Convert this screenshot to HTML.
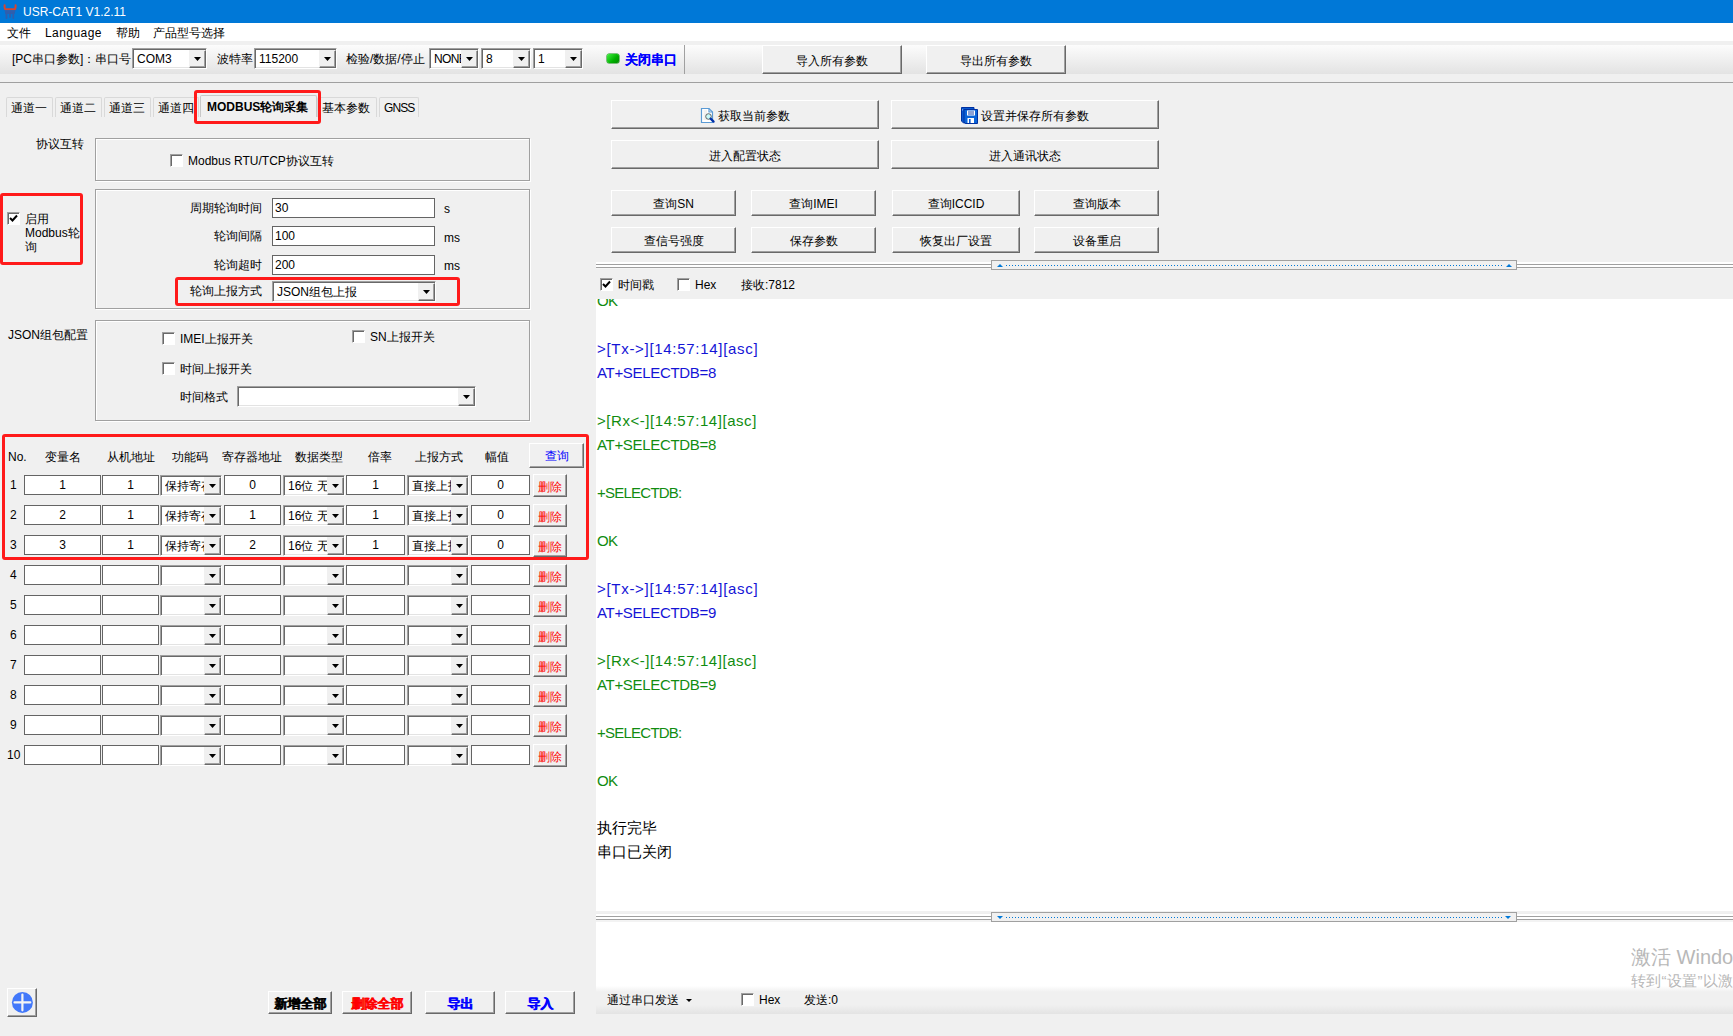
<!DOCTYPE html><html><head><meta charset="utf-8"><style>
*{box-sizing:border-box;margin:0;padding:0}
html,body{width:1733px;height:1036px;overflow:hidden;background:#f0f0f0;font-family:"Liberation Sans",sans-serif;font-size:12px;color:#000}
.a{position:absolute}
.t{white-space:nowrap;line-height:14px}
.btn{background:#f0f0f0;border-top:1px solid #fff;border-left:1px solid #fff;border-right:1px solid #696969;border-bottom:1px solid #696969;box-shadow:inset -1px -1px 0 #a0a0a0;display:flex;align-items:center;justify-content:center;white-space:nowrap;padding-top:2px}
.edit{background:#fff;border:1px solid #646464;padding:2px 2px;line-height:14px;white-space:nowrap;overflow:hidden}
.combo{background:#fff;border-top:1px solid #a0a0a0;border-left:1px solid #a0a0a0;border-right:1px solid #fff;border-bottom:1px solid #fff;box-shadow:inset 1px 1px 0 #696969, inset -1px -1px 0 #e3e3e3;overflow:hidden}
.combo .ct{position:absolute;left:4px;right:17px;overflow:hidden;top:3px;line-height:14px;white-space:nowrap}
.cb{position:absolute;right:0;top:1px;bottom:0;width:17px;background:#f0f0f0;border-top:1px solid #f0f0f0;border-left:1px solid #f0f0f0;border-right:1px solid #696969;border-bottom:1px solid #696969;box-shadow:inset -1px -1px 0 #a0a0a0}
.arr{position:absolute;left:4px;top:50%;margin-top:-2px}
.chk{background:#fff;border-top:1px solid #a0a0a0;border-left:1px solid #a0a0a0;border-right:1px solid #fff;border-bottom:1px solid #fff;box-shadow:inset 1px 1px 0 #696969}
.grp{border:1px solid #a0a0a0;box-shadow:inset 1px 1px 0 #fff, 1px 1px 0 #fff}
.red{border:3px solid #ff1a1a;border-radius:3px}
.tab{background:#f0f0f0;border:1px solid #d9d9d9;border-bottom:none;border-radius:2px 2px 0 0;white-space:nowrap;line-height:14px}
.log{font-size:15px;line-height:24px;white-space:pre;}
</style></head><body><div class="a " style="left:0px;top:0px;width:1733px;height:23px;background:#0078d7"></div>
<svg class="a" style="left:0;top:1px" width="20" height="20" viewBox="0 0 20 20"><path d="M4.6 4.2Q4.4 8 5.5 8.3H14.5Q15.8 8 15.6 4.2" stroke="#d8452e" stroke-width="2" fill="none" stroke-linecap="round"/><path d="M4.5 9.3H15.5L14.6 13H5.4Z" fill="#2f5fae"/><path d="M6.5 12V17M10 12V16M13.3 12V17" stroke="#2f5fae" stroke-width="1.8" stroke-linecap="round"/></svg>
<div class="a t " style="left:23px;top:5px;color:#fff;font-size:12px">USR-CAT1 V1.2.11</div>
<div class="a " style="left:0px;top:23px;width:1733px;height:18px;background:#fff"></div>
<div class="a t " style="left:7px;top:26px;">文件</div>
<div class="a t " style="left:45px;top:26px;letter-spacing:0.45px">Language</div>
<div class="a t " style="left:116px;top:26px;">帮助</div>
<div class="a t " style="left:153px;top:26px;">产品型号选择</div>
<div class="a " style="left:0px;top:45px;width:1733px;height:29px;background:linear-gradient(#fcfcfc,#e3e3e3)"></div>
<div class="a " style="left:0px;top:82px;width:1733px;height:1px;background:#a0a0a0"></div>
<div class="a t " style="left:12px;top:52px;">[PC串口参数]：串口号</div>
<div class="a combo" style="left:132px;top:48px;width:75px;height:21px;"><span class="ct">COM3</span><div class="cb"><svg class="arr" width="7" height="4" viewBox="0 0 7 4"><path d="M0 0H7L3.5 4Z" fill="#000"/></svg></div></div>
<div class="a t " style="left:217px;top:52px;">波特率</div>
<div class="a combo" style="left:254px;top:48px;width:83px;height:21px;"><span class="ct">115200</span><div class="cb"><svg class="arr" width="7" height="4" viewBox="0 0 7 4"><path d="M0 0H7L3.5 4Z" fill="#000"/></svg></div></div>
<div class="a t " style="left:346px;top:52px;">检验/数据/停止</div>
<div class="a combo" style="left:429px;top:48px;width:50px;height:21px;"><span class="ct"><span style="letter-spacing:-0.6px">NONE</span></span><div class="cb"><svg class="arr" width="7" height="4" viewBox="0 0 7 4"><path d="M0 0H7L3.5 4Z" fill="#000"/></svg></div></div>
<div class="a combo" style="left:481px;top:48px;width:50px;height:21px;"><span class="ct">8</span><div class="cb"><svg class="arr" width="7" height="4" viewBox="0 0 7 4"><path d="M0 0H7L3.5 4Z" fill="#000"/></svg></div></div>
<div class="a combo" style="left:533px;top:48px;width:50px;height:21px;"><span class="ct">1</span><div class="cb"><svg class="arr" width="7" height="4" viewBox="0 0 7 4"><path d="M0 0H7L3.5 4Z" fill="#000"/></svg></div></div>
<div class="a " style="left:607px;top:54px;width:12px;height:9px;background:linear-gradient(135deg,#40f040,#00b000 60%,#008a00);border-radius:2px;box-shadow:0 0 0 0.5px #0a8a0a"></div>
<div class="a t " style="left:625px;top:53px;color:#0000ff;font-weight:bold;font-size:13px;text-shadow:0.4px 0 0 #0000ff">关闭串口</div>
<div class="a " style="left:684px;top:45px;width:1px;height:29px;background:#a0a0a0"></div>
<div class="a btn" style="left:762px;top:45px;width:140px;height:29px;padding-top:4px">导入所有参数</div>
<div class="a btn" style="left:926px;top:45px;width:140px;height:29px;padding-top:4px">导出所有参数</div>
<div class="a tab" style="left:6px;top:97px;width:47px;height:20px;"><span class="a t" style="left:4px;top:3px;letter-spacing:0">通道一</span></div>
<div class="a tab" style="left:55px;top:97px;width:47px;height:20px;"><span class="a t" style="left:4px;top:3px;letter-spacing:0">通道二</span></div>
<div class="a tab" style="left:104px;top:97px;width:47px;height:20px;"><span class="a t" style="left:4px;top:3px;letter-spacing:0">通道三</span></div>
<div class="a tab" style="left:153px;top:97px;width:46px;height:20px;"><span class="a t" style="left:4px;top:3px;letter-spacing:0">通道四</span></div>
<div class="a tab" style="left:317px;top:97px;width:60px;height:20px;"><span class="a t" style="left:4px;top:3px;letter-spacing:0">基本参数</span></div>
<div class="a tab" style="left:379px;top:97px;width:40px;height:20px;"><span class="a t" style="left:4px;top:3px;letter-spacing:-0.9px">GNSS</span></div>
<div class="a tab" style="left:200px;top:95px;width:117px;height:22px;border-color:#c8c8c8"><span class="a t" style="left:6px;top:4px;font-weight:bold">MODBUS轮询采集</span></div>
<div class="a red" style="left:194px;top:90px;width:127px;height:34px;"></div>
<div class="a t " style="left:36px;top:137px;">协议互转</div>
<div class="a grp" style="left:95px;top:138px;width:435px;height:43px;"></div>
<div class="a chk" style="left:170px;top:154px;width:13px;height:13px;"></div>
<div class="a t " style="left:188px;top:154px;">Modbus RTU/TCP协议互转</div>
<div class="a red" style="left:0px;top:193px;width:83px;height:72px;"></div>
<div class="a chk" style="left:7px;top:212px;width:13px;height:13px;"><svg width="9" height="9" viewBox="0 0 9 9" style="position:absolute;left:1px;top:1px"><path d="M1 4 L3.5 6.5 L8 1.5" stroke="#000" stroke-width="2" fill="none"/></svg></div>
<div class="a t " style="left:25px;top:212px;">启用</div>
<div class="a t " style="left:25px;top:226px;">Modbus轮</div>
<div class="a t " style="left:25px;top:240px;">询</div>
<div class="a grp" style="left:95px;top:189px;width:435px;height:120px;"></div>
<div class="a t " style="left:190px;top:201px;">周期轮询时间</div>
<div class="a edit" style="left:272px;top:198px;width:163px;height:20px;text-align:left;">30</div>
<div class="a t " style="left:444px;top:202px;">s</div>
<div class="a t " style="left:214px;top:229px;">轮询间隔</div>
<div class="a edit" style="left:272px;top:226px;width:163px;height:20px;text-align:left;">100</div>
<div class="a t " style="left:444px;top:231px;">ms</div>
<div class="a t " style="left:214px;top:258px;">轮询超时</div>
<div class="a edit" style="left:272px;top:255px;width:163px;height:20px;text-align:left;">200</div>
<div class="a t " style="left:444px;top:259px;">ms</div>
<div class="a t " style="left:190px;top:284px;">轮询上报方式</div>
<div class="a combo" style="left:272px;top:281px;width:164px;height:21px;"><span class="ct">JSON组包上报</span><div class="cb"><svg class="arr" width="7" height="4" viewBox="0 0 7 4"><path d="M0 0H7L3.5 4Z" fill="#000"/></svg></div></div>
<div class="a red" style="left:175px;top:277px;width:285px;height:29px;"></div>
<div class="a t " style="left:8px;top:328px;">JSON组包配置</div>
<div class="a grp" style="left:95px;top:320px;width:435px;height:101px;"></div>
<div class="a chk" style="left:162px;top:332px;width:13px;height:13px;"></div>
<div class="a t " style="left:180px;top:332px;">IMEI上报开关</div>
<div class="a chk" style="left:352px;top:330px;width:13px;height:13px;"></div>
<div class="a t " style="left:370px;top:330px;">SN上报开关</div>
<div class="a chk" style="left:162px;top:362px;width:13px;height:13px;"></div>
<div class="a t " style="left:180px;top:362px;">时间上报开关</div>
<div class="a t " style="left:180px;top:390px;">时间格式</div>
<div class="a combo" style="left:237px;top:386px;width:239px;height:21px;"><span class="ct"></span><div class="cb"><svg class="arr" width="7" height="4" viewBox="0 0 7 4"><path d="M0 0H7L3.5 4Z" fill="#000"/></svg></div></div>
<div class="a red" style="left:2px;top:434px;width:587px;height:126px;"></div>
<div class="a t " style="left:8px;top:450px;">No.</div>
<div class="a t " style="left:45px;top:450px;">变量名</div>
<div class="a t " style="left:107px;top:450px;">从机地址</div>
<div class="a t " style="left:172px;top:450px;">功能码</div>
<div class="a t " style="left:222px;top:450px;">寄存器地址</div>
<div class="a t " style="left:295px;top:450px;">数据类型</div>
<div class="a t " style="left:368px;top:450px;">倍率</div>
<div class="a t " style="left:415px;top:450px;">上报方式</div>
<div class="a t " style="left:485px;top:450px;">幅值</div>
<div class="a btn" style="left:529px;top:443px;width:55px;height:25px;color:#0000ff">查询</div>
<div class="a t " style="left:10px;top:478px;">1</div>
<div class="a edit" style="left:24px;top:475px;width:77px;height:20px;text-align:center;">1</div>
<div class="a edit" style="left:102px;top:475px;width:57px;height:20px;text-align:center;">1</div>
<div class="a combo" style="left:160px;top:475px;width:62px;height:21px;"><span class="ct">保持寄存器</span><div class="cb"><svg class="arr" width="7" height="4" viewBox="0 0 7 4"><path d="M0 0H7L3.5 4Z" fill="#000"/></svg></div></div>
<div class="a edit" style="left:224px;top:475px;width:57px;height:20px;text-align:center;">0</div>
<div class="a combo" style="left:283px;top:475px;width:62px;height:21px;"><span class="ct">16位 无符号</span><div class="cb"><svg class="arr" width="7" height="4" viewBox="0 0 7 4"><path d="M0 0H7L3.5 4Z" fill="#000"/></svg></div></div>
<div class="a edit" style="left:346px;top:475px;width:59px;height:20px;text-align:center;">1</div>
<div class="a combo" style="left:407px;top:475px;width:62px;height:21px;"><span class="ct">直接上报</span><div class="cb"><svg class="arr" width="7" height="4" viewBox="0 0 7 4"><path d="M0 0H7L3.5 4Z" fill="#000"/></svg></div></div>
<div class="a edit" style="left:471px;top:475px;width:59px;height:20px;text-align:center;">0</div>
<div class="a btn" style="left:533px;top:474px;width:34px;height:23px;color:#ff0000;padding-top:3px">删除</div>
<div class="a t " style="left:10px;top:508px;">2</div>
<div class="a edit" style="left:24px;top:505px;width:77px;height:20px;text-align:center;">2</div>
<div class="a edit" style="left:102px;top:505px;width:57px;height:20px;text-align:center;">1</div>
<div class="a combo" style="left:160px;top:505px;width:62px;height:21px;"><span class="ct">保持寄存器</span><div class="cb"><svg class="arr" width="7" height="4" viewBox="0 0 7 4"><path d="M0 0H7L3.5 4Z" fill="#000"/></svg></div></div>
<div class="a edit" style="left:224px;top:505px;width:57px;height:20px;text-align:center;">1</div>
<div class="a combo" style="left:283px;top:505px;width:62px;height:21px;"><span class="ct">16位 无符号</span><div class="cb"><svg class="arr" width="7" height="4" viewBox="0 0 7 4"><path d="M0 0H7L3.5 4Z" fill="#000"/></svg></div></div>
<div class="a edit" style="left:346px;top:505px;width:59px;height:20px;text-align:center;">1</div>
<div class="a combo" style="left:407px;top:505px;width:62px;height:21px;"><span class="ct">直接上报</span><div class="cb"><svg class="arr" width="7" height="4" viewBox="0 0 7 4"><path d="M0 0H7L3.5 4Z" fill="#000"/></svg></div></div>
<div class="a edit" style="left:471px;top:505px;width:59px;height:20px;text-align:center;">0</div>
<div class="a btn" style="left:533px;top:504px;width:34px;height:23px;color:#ff0000;padding-top:3px">删除</div>
<div class="a t " style="left:10px;top:538px;">3</div>
<div class="a edit" style="left:24px;top:535px;width:77px;height:20px;text-align:center;">3</div>
<div class="a edit" style="left:102px;top:535px;width:57px;height:20px;text-align:center;">1</div>
<div class="a combo" style="left:160px;top:535px;width:62px;height:21px;"><span class="ct">保持寄存器</span><div class="cb"><svg class="arr" width="7" height="4" viewBox="0 0 7 4"><path d="M0 0H7L3.5 4Z" fill="#000"/></svg></div></div>
<div class="a edit" style="left:224px;top:535px;width:57px;height:20px;text-align:center;">2</div>
<div class="a combo" style="left:283px;top:535px;width:62px;height:21px;"><span class="ct">16位 无符号</span><div class="cb"><svg class="arr" width="7" height="4" viewBox="0 0 7 4"><path d="M0 0H7L3.5 4Z" fill="#000"/></svg></div></div>
<div class="a edit" style="left:346px;top:535px;width:59px;height:20px;text-align:center;">1</div>
<div class="a combo" style="left:407px;top:535px;width:62px;height:21px;"><span class="ct">直接上报</span><div class="cb"><svg class="arr" width="7" height="4" viewBox="0 0 7 4"><path d="M0 0H7L3.5 4Z" fill="#000"/></svg></div></div>
<div class="a edit" style="left:471px;top:535px;width:59px;height:20px;text-align:center;">0</div>
<div class="a btn" style="left:533px;top:534px;width:34px;height:23px;color:#ff0000;padding-top:3px">删除</div>
<div class="a t " style="left:10px;top:568px;">4</div>
<div class="a edit" style="left:24px;top:565px;width:77px;height:20px;text-align:center;"></div>
<div class="a edit" style="left:102px;top:565px;width:57px;height:20px;text-align:center;"></div>
<div class="a combo" style="left:160px;top:565px;width:62px;height:21px;"><span class="ct"></span><div class="cb"><svg class="arr" width="7" height="4" viewBox="0 0 7 4"><path d="M0 0H7L3.5 4Z" fill="#000"/></svg></div></div>
<div class="a edit" style="left:224px;top:565px;width:57px;height:20px;text-align:center;"></div>
<div class="a combo" style="left:283px;top:565px;width:62px;height:21px;"><span class="ct"></span><div class="cb"><svg class="arr" width="7" height="4" viewBox="0 0 7 4"><path d="M0 0H7L3.5 4Z" fill="#000"/></svg></div></div>
<div class="a edit" style="left:346px;top:565px;width:59px;height:20px;text-align:center;"></div>
<div class="a combo" style="left:407px;top:565px;width:62px;height:21px;"><span class="ct"></span><div class="cb"><svg class="arr" width="7" height="4" viewBox="0 0 7 4"><path d="M0 0H7L3.5 4Z" fill="#000"/></svg></div></div>
<div class="a edit" style="left:471px;top:565px;width:59px;height:20px;text-align:center;"></div>
<div class="a btn" style="left:533px;top:564px;width:34px;height:23px;color:#ff0000;padding-top:3px">删除</div>
<div class="a t " style="left:10px;top:598px;">5</div>
<div class="a edit" style="left:24px;top:595px;width:77px;height:20px;text-align:center;"></div>
<div class="a edit" style="left:102px;top:595px;width:57px;height:20px;text-align:center;"></div>
<div class="a combo" style="left:160px;top:595px;width:62px;height:21px;"><span class="ct"></span><div class="cb"><svg class="arr" width="7" height="4" viewBox="0 0 7 4"><path d="M0 0H7L3.5 4Z" fill="#000"/></svg></div></div>
<div class="a edit" style="left:224px;top:595px;width:57px;height:20px;text-align:center;"></div>
<div class="a combo" style="left:283px;top:595px;width:62px;height:21px;"><span class="ct"></span><div class="cb"><svg class="arr" width="7" height="4" viewBox="0 0 7 4"><path d="M0 0H7L3.5 4Z" fill="#000"/></svg></div></div>
<div class="a edit" style="left:346px;top:595px;width:59px;height:20px;text-align:center;"></div>
<div class="a combo" style="left:407px;top:595px;width:62px;height:21px;"><span class="ct"></span><div class="cb"><svg class="arr" width="7" height="4" viewBox="0 0 7 4"><path d="M0 0H7L3.5 4Z" fill="#000"/></svg></div></div>
<div class="a edit" style="left:471px;top:595px;width:59px;height:20px;text-align:center;"></div>
<div class="a btn" style="left:533px;top:594px;width:34px;height:23px;color:#ff0000;padding-top:3px">删除</div>
<div class="a t " style="left:10px;top:628px;">6</div>
<div class="a edit" style="left:24px;top:625px;width:77px;height:20px;text-align:center;"></div>
<div class="a edit" style="left:102px;top:625px;width:57px;height:20px;text-align:center;"></div>
<div class="a combo" style="left:160px;top:625px;width:62px;height:21px;"><span class="ct"></span><div class="cb"><svg class="arr" width="7" height="4" viewBox="0 0 7 4"><path d="M0 0H7L3.5 4Z" fill="#000"/></svg></div></div>
<div class="a edit" style="left:224px;top:625px;width:57px;height:20px;text-align:center;"></div>
<div class="a combo" style="left:283px;top:625px;width:62px;height:21px;"><span class="ct"></span><div class="cb"><svg class="arr" width="7" height="4" viewBox="0 0 7 4"><path d="M0 0H7L3.5 4Z" fill="#000"/></svg></div></div>
<div class="a edit" style="left:346px;top:625px;width:59px;height:20px;text-align:center;"></div>
<div class="a combo" style="left:407px;top:625px;width:62px;height:21px;"><span class="ct"></span><div class="cb"><svg class="arr" width="7" height="4" viewBox="0 0 7 4"><path d="M0 0H7L3.5 4Z" fill="#000"/></svg></div></div>
<div class="a edit" style="left:471px;top:625px;width:59px;height:20px;text-align:center;"></div>
<div class="a btn" style="left:533px;top:624px;width:34px;height:23px;color:#ff0000;padding-top:3px">删除</div>
<div class="a t " style="left:10px;top:658px;">7</div>
<div class="a edit" style="left:24px;top:655px;width:77px;height:20px;text-align:center;"></div>
<div class="a edit" style="left:102px;top:655px;width:57px;height:20px;text-align:center;"></div>
<div class="a combo" style="left:160px;top:655px;width:62px;height:21px;"><span class="ct"></span><div class="cb"><svg class="arr" width="7" height="4" viewBox="0 0 7 4"><path d="M0 0H7L3.5 4Z" fill="#000"/></svg></div></div>
<div class="a edit" style="left:224px;top:655px;width:57px;height:20px;text-align:center;"></div>
<div class="a combo" style="left:283px;top:655px;width:62px;height:21px;"><span class="ct"></span><div class="cb"><svg class="arr" width="7" height="4" viewBox="0 0 7 4"><path d="M0 0H7L3.5 4Z" fill="#000"/></svg></div></div>
<div class="a edit" style="left:346px;top:655px;width:59px;height:20px;text-align:center;"></div>
<div class="a combo" style="left:407px;top:655px;width:62px;height:21px;"><span class="ct"></span><div class="cb"><svg class="arr" width="7" height="4" viewBox="0 0 7 4"><path d="M0 0H7L3.5 4Z" fill="#000"/></svg></div></div>
<div class="a edit" style="left:471px;top:655px;width:59px;height:20px;text-align:center;"></div>
<div class="a btn" style="left:533px;top:654px;width:34px;height:23px;color:#ff0000;padding-top:3px">删除</div>
<div class="a t " style="left:10px;top:688px;">8</div>
<div class="a edit" style="left:24px;top:685px;width:77px;height:20px;text-align:center;"></div>
<div class="a edit" style="left:102px;top:685px;width:57px;height:20px;text-align:center;"></div>
<div class="a combo" style="left:160px;top:685px;width:62px;height:21px;"><span class="ct"></span><div class="cb"><svg class="arr" width="7" height="4" viewBox="0 0 7 4"><path d="M0 0H7L3.5 4Z" fill="#000"/></svg></div></div>
<div class="a edit" style="left:224px;top:685px;width:57px;height:20px;text-align:center;"></div>
<div class="a combo" style="left:283px;top:685px;width:62px;height:21px;"><span class="ct"></span><div class="cb"><svg class="arr" width="7" height="4" viewBox="0 0 7 4"><path d="M0 0H7L3.5 4Z" fill="#000"/></svg></div></div>
<div class="a edit" style="left:346px;top:685px;width:59px;height:20px;text-align:center;"></div>
<div class="a combo" style="left:407px;top:685px;width:62px;height:21px;"><span class="ct"></span><div class="cb"><svg class="arr" width="7" height="4" viewBox="0 0 7 4"><path d="M0 0H7L3.5 4Z" fill="#000"/></svg></div></div>
<div class="a edit" style="left:471px;top:685px;width:59px;height:20px;text-align:center;"></div>
<div class="a btn" style="left:533px;top:684px;width:34px;height:23px;color:#ff0000;padding-top:3px">删除</div>
<div class="a t " style="left:10px;top:718px;">9</div>
<div class="a edit" style="left:24px;top:715px;width:77px;height:20px;text-align:center;"></div>
<div class="a edit" style="left:102px;top:715px;width:57px;height:20px;text-align:center;"></div>
<div class="a combo" style="left:160px;top:715px;width:62px;height:21px;"><span class="ct"></span><div class="cb"><svg class="arr" width="7" height="4" viewBox="0 0 7 4"><path d="M0 0H7L3.5 4Z" fill="#000"/></svg></div></div>
<div class="a edit" style="left:224px;top:715px;width:57px;height:20px;text-align:center;"></div>
<div class="a combo" style="left:283px;top:715px;width:62px;height:21px;"><span class="ct"></span><div class="cb"><svg class="arr" width="7" height="4" viewBox="0 0 7 4"><path d="M0 0H7L3.5 4Z" fill="#000"/></svg></div></div>
<div class="a edit" style="left:346px;top:715px;width:59px;height:20px;text-align:center;"></div>
<div class="a combo" style="left:407px;top:715px;width:62px;height:21px;"><span class="ct"></span><div class="cb"><svg class="arr" width="7" height="4" viewBox="0 0 7 4"><path d="M0 0H7L3.5 4Z" fill="#000"/></svg></div></div>
<div class="a edit" style="left:471px;top:715px;width:59px;height:20px;text-align:center;"></div>
<div class="a btn" style="left:533px;top:714px;width:34px;height:23px;color:#ff0000;padding-top:3px">删除</div>
<div class="a t " style="left:7px;top:748px;">10</div>
<div class="a edit" style="left:24px;top:745px;width:77px;height:20px;text-align:center;"></div>
<div class="a edit" style="left:102px;top:745px;width:57px;height:20px;text-align:center;"></div>
<div class="a combo" style="left:160px;top:745px;width:62px;height:21px;"><span class="ct"></span><div class="cb"><svg class="arr" width="7" height="4" viewBox="0 0 7 4"><path d="M0 0H7L3.5 4Z" fill="#000"/></svg></div></div>
<div class="a edit" style="left:224px;top:745px;width:57px;height:20px;text-align:center;"></div>
<div class="a combo" style="left:283px;top:745px;width:62px;height:21px;"><span class="ct"></span><div class="cb"><svg class="arr" width="7" height="4" viewBox="0 0 7 4"><path d="M0 0H7L3.5 4Z" fill="#000"/></svg></div></div>
<div class="a edit" style="left:346px;top:745px;width:59px;height:20px;text-align:center;"></div>
<div class="a combo" style="left:407px;top:745px;width:62px;height:21px;"><span class="ct"></span><div class="cb"><svg class="arr" width="7" height="4" viewBox="0 0 7 4"><path d="M0 0H7L3.5 4Z" fill="#000"/></svg></div></div>
<div class="a edit" style="left:471px;top:745px;width:59px;height:20px;text-align:center;"></div>
<div class="a btn" style="left:533px;top:744px;width:34px;height:23px;color:#ff0000;padding-top:3px">删除</div>
<div class="a btn" style="left:7px;top:988px;width:30px;height:29px;"><svg class="a" style="left:2px;top:1px" width="24" height="24" viewBox="0 0 24 24"><circle cx="12.4" cy="12.4" r="10.5" fill="#4278fa"/><path d="M12.4 4.5V20.3M4.5 12.4H20.3" stroke="#f4f4f4" stroke-width="2.2" stroke-linecap="round"/></svg></div>
<div class="a btn" style="left:268px;top:991px;width:64px;height:23px;font-weight:bold;font-size:13px;padding-top:3px;text-shadow:0.5px 0 0 currentColor">新增全部</div>
<div class="a btn" style="left:342px;top:991px;width:70px;height:23px;font-weight:bold;color:#ff0000;font-size:13px;padding-top:3px;text-shadow:0.5px 0 0 currentColor">删除全部</div>
<div class="a btn" style="left:425px;top:991px;width:70px;height:23px;font-weight:bold;color:#0000ff;font-size:13px;padding-top:3px;text-shadow:0.5px 0 0 currentColor">导出</div>
<div class="a btn" style="left:505px;top:991px;width:70px;height:23px;font-weight:bold;color:#0000ff;font-size:13px;padding-top:3px;text-shadow:0.5px 0 0 currentColor">导入</div>
<div class="a btn" style="left:611px;top:100px;width:268px;height:29px;padding-top:4px;padding-left:18px"><svg class="a" style="left:88px;top:6px" width="20" height="18" viewBox="0 0 20 18"><path d="M1.5 1.5H9L12.5 5V15.5H1.5Z" fill="#fff" stroke="#5b9bd5" stroke-width="1.2"/><path d="M9 1.5V5H12.5" fill="none" stroke="#5b9bd5" stroke-width="1.2"/><path d="M3.5 4H7M3.5 6H7M3.5 8H6M3.5 10H6M3.5 12H7" stroke="#ddd" stroke-width="0.8"/><circle cx="8.5" cy="9.5" r="2.8" fill="#c8f8f8" stroke="#555" stroke-width="0.9"/><path d="M10.6 11.6L13.6 14.6" stroke="#0030a8" stroke-width="2.2" stroke-linecap="round"/></svg>获取当前参数</div>
<div class="a btn" style="left:891px;top:100px;width:268px;height:29px;padding-top:4px;padding-left:19px"><svg class="a" style="left:69px;top:6px" width="18" height="18" viewBox="0 0 18 18"><path d="M0.5 0.5H13V14L11 16H2.5L0.5 14Z" fill="#0a5ad0" stroke="#0030a0" stroke-width="1"/><path d="M3 2.5H16.5V16.5H4.5L3 15Z" fill="#0a64d8" stroke="#0030a0" stroke-width="1"/><rect x="6" y="3.5" width="8" height="5" fill="#fff"/><path d="M7 5H13M7 7H13" stroke="#0030a0" stroke-width="0.9"/><rect x="6.5" y="11" width="6.5" height="5" fill="#fff"/><rect x="8" y="12" width="1.6" height="4" fill="#0a5ad0"/><path d="M1.5 2.5V13" stroke="#fff" stroke-width="0.8" stroke-dasharray="0.8 12"/></svg>设置并保存所有参数</div>
<div class="a btn" style="left:611px;top:140px;width:268px;height:29px;padding-top:4px">进入配置状态</div>
<div class="a btn" style="left:891px;top:140px;width:268px;height:29px;padding-top:4px">进入通讯状态</div>
<div class="a btn" style="left:611px;top:190px;width:125px;height:26px;padding-top:3px">查询SN</div>
<div class="a btn" style="left:751px;top:190px;width:125px;height:26px;padding-top:3px">查询IMEI</div>
<div class="a btn" style="left:892px;top:190px;width:128px;height:26px;padding-top:3px">查询ICCID</div>
<div class="a btn" style="left:1034px;top:190px;width:125px;height:26px;padding-top:3px">查询版本</div>
<div class="a btn" style="left:611px;top:227px;width:125px;height:26px;padding-top:3px">查信号强度</div>
<div class="a btn" style="left:751px;top:227px;width:125px;height:26px;padding-top:3px">保存参数</div>
<div class="a btn" style="left:892px;top:227px;width:128px;height:26px;padding-top:3px">恢复出厂设置</div>
<div class="a btn" style="left:1034px;top:227px;width:125px;height:26px;padding-top:3px">设备重启</div>
<div class="a " style="left:596px;top:262px;width:1137px;height:7px;background:linear-gradient(#fff 0 2px,#a0a0a0 2px 3px,#fff 3px 5px,#a0a0a0 5px 6px,#f5f5f5 6px 7px)"></div>
<div class="a " style="left:991px;top:260px;width:526px;height:10px;background:#f0f0f0;border:1px solid #a0a0a0"><div class="a" style="left:14px;right:14px;top:4px;height:1px;background:repeating-linear-gradient(90deg,#0078d7 0 1px,transparent 1px 3px)"></div><div class="a" style="left:5px;top:3px;width:0;height:0;border-left:3px solid transparent;border-right:3px solid transparent;border-bottom:3px solid #0078d7"></div><div class="a" style="right:4px;top:3px;width:0;height:0;border-left:3px solid transparent;border-right:3px solid transparent;border-bottom:3px solid #0078d7"></div></div>
<div class="a chk" style="left:600px;top:278px;width:13px;height:13px;"><svg width="9" height="9" viewBox="0 0 9 9" style="position:absolute;left:1px;top:1px"><path d="M1 4 L3.5 6.5 L8 1.5" stroke="#000" stroke-width="2" fill="none"/></svg></div>
<div class="a t " style="left:618px;top:278px;">时间戳</div>
<div class="a chk" style="left:677px;top:278px;width:13px;height:13px;"></div>
<div class="a t " style="left:695px;top:278px;">Hex</div>
<div class="a t " style="left:741px;top:278px;">接收:7812</div>
<div class="a " style="left:596px;top:299px;width:1137px;height:612px;background:#fff;overflow:hidden"><div class="a t log" style="left:1px;top:-10px;color:#108c10;letter-spacing:-0.6px">OK</div><div class="a t log" style="left:1px;top:38px;color:#1414d6;letter-spacing:0.7px">&gt;[Tx-&gt;][14:57:14][asc]</div><div class="a t log" style="left:1px;top:62px;color:#1414d6;letter-spacing:-0.32px">AT+SELECTDB=8</div><div class="a t log" style="left:1px;top:110px;color:#108c10;letter-spacing:0.56px">&gt;[Rx&lt;-][14:57:14][asc]</div><div class="a t log" style="left:1px;top:134px;color:#108c10;letter-spacing:-0.32px">AT+SELECTDB=8</div><div class="a t log" style="left:1px;top:182px;color:#108c10;letter-spacing:-0.76px">+SELECTDB:</div><div class="a t log" style="left:1px;top:230px;color:#108c10;letter-spacing:-0.6px">OK</div><div class="a t log" style="left:1px;top:278px;color:#1414d6;letter-spacing:0.7px">&gt;[Tx-&gt;][14:57:14][asc]</div><div class="a t log" style="left:1px;top:302px;color:#1414d6;letter-spacing:-0.32px">AT+SELECTDB=9</div><div class="a t log" style="left:1px;top:350px;color:#108c10;letter-spacing:0.56px">&gt;[Rx&lt;-][14:57:14][asc]</div><div class="a t log" style="left:1px;top:374px;color:#108c10;letter-spacing:-0.32px">AT+SELECTDB=9</div><div class="a t log" style="left:1px;top:422px;color:#108c10;letter-spacing:-0.76px">+SELECTDB:</div><div class="a t log" style="left:1px;top:470px;color:#108c10;letter-spacing:-0.6px">OK</div><div class="a t log" style="left:1px;top:517px;color:#000;letter-spacing:0px">执行完毕</div><div class="a t log" style="left:1px;top:541px;color:#000;letter-spacing:0px">串口已关闭</div></div>
<div class="a " style="left:596px;top:913px;width:1137px;height:9px;background:linear-gradient(#eee 0 1px,#fff 1px 3px,#a0a0a0 3px 4px,#fff 4px 6px,#a0a0a0 6px 7px,#f3f3f3 7px 9px)"></div>
<div class="a " style="left:991px;top:912px;width:526px;height:10px;background:#f0f0f0;border:1px solid #a0a0a0"><div class="a" style="left:14px;right:14px;top:4px;height:1px;background:repeating-linear-gradient(90deg,#0078d7 0 1px,transparent 1px 3px)"></div><div class="a" style="left:5px;top:3px;width:0;height:0;border-left:3px solid transparent;border-right:3px solid transparent;border-top:3px solid #0078d7"></div><div class="a" style="right:5px;top:3px;width:0;height:0;border-left:3px solid transparent;border-right:3px solid transparent;border-top:3px solid #0078d7"></div></div>
<div class="a " style="left:596px;top:922px;width:1137px;height:64px;background:#fff"></div>
<div class="a " style="left:596px;top:986px;width:1137px;height:28px;background:linear-gradient(#fff 0,#f0f0f0 6px,#f0f0f0 19px,#e3e3e3 28px)"></div>
<div class="a t " style="left:607px;top:993px;">通过串口发送</div>
<div class="a " style="left:686px;top:999px;width:0px;height:0px;border-left:3px solid transparent;border-right:3px solid transparent;border-top:3px solid #000"></div>
<div class="a " style="left:740px;top:991px;width:65px;height:16px;background:#f0f0f0"></div>
<div class="a chk" style="left:741px;top:993px;width:13px;height:13px;"></div>
<div class="a t " style="left:759px;top:993px;">Hex</div>
<div class="a t " style="left:804px;top:993px;">发送:0</div>
<div class="a t " style="left:1631px;top:946px;color:#b8b8b8;font-size:20px;line-height:22px">激活 Windows</div>
<div class="a t " style="left:1631px;top:972px;color:#b8b8b8;font-size:15px;line-height:17px;letter-spacing:0.3px">转到“设置”以激活Windows。</div></body></html>
